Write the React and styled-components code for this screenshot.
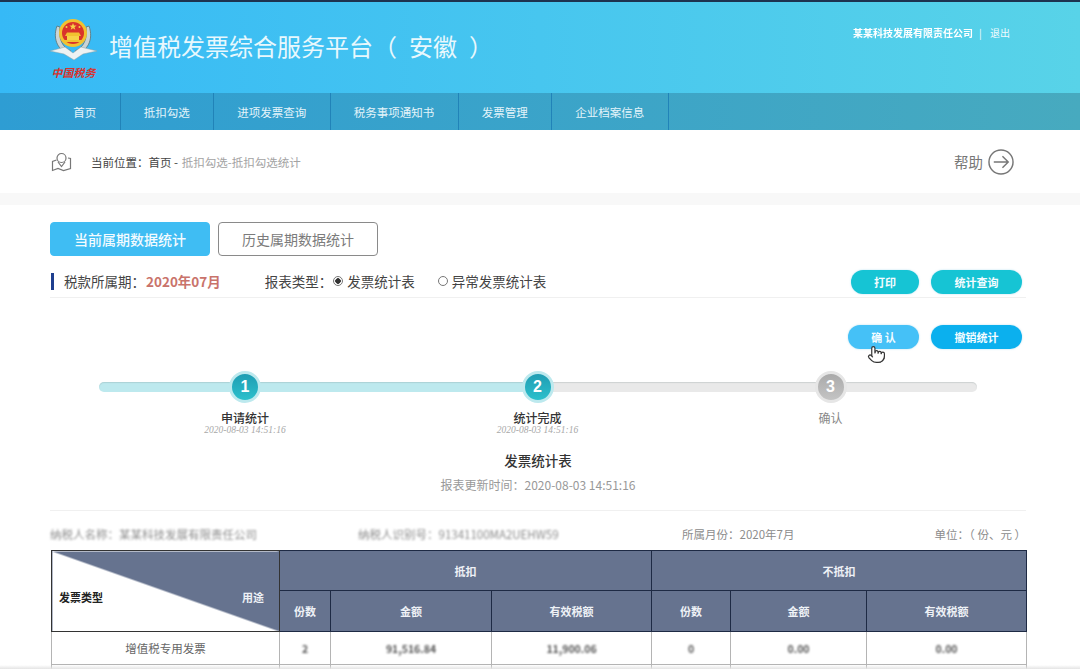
import React from "react";
import styled, { createGlobalStyle } from "styled-components";
import { Pointer } from "lucide-react";

const FONT = `"Noto Sans CJK SC", "Liberation Sans", sans-serif`;

const NAV_ITEMS = ["首页", "抵扣勾选", "进项发票查询", "税务事项通知书", "发票管理", "企业档案信息"];

const STEPS = [
  { num: 1, label: "申请统计", time: "2020-08-03 14:51:16", done: true },
  { num: 2, label: "统计完成", time: "2020-08-03 14:51:16", done: true },
  { num: 3, label: "确认", done: false },
];

const GlobalStyle = createGlobalStyle`
  html, body {
    margin: 0;
    height: 669px;
    overflow: hidden;
    background: #fff;
    font-family: ${FONT};
  }
  * { box-sizing: border-box; }
`;

const Page = styled.div`
  position: relative;
  width: 1080px;
  height: 669px;
  overflow: hidden;
  border-top: 2px solid #1d3350;

  &::after {
    content: "";
    position: absolute;
    left: 0;
    right: 0;
    bottom: 0;
    height: 4px;
    background: linear-gradient(to bottom, rgba(225, 225, 225, 0), #e4e4e4);
  }
`;

const Header = styled.header`
  display: flex;
  justify-content: space-between;
  height: 91px;
  padding: 11px 70px 0 50px;
  background: linear-gradient(to right, #36b9f6, #58d3e8);
`;

const Brand = styled.div`
  display: flex;
  align-items: flex-start;
  gap: 12px;
`;

const LogoBox = styled.div`
  display: flex;
  flex-direction: column;
  align-items: center;
  width: 47px;
`;

const LogoText = styled.span`
  margin-top: 3px;
  font-size: 11px;
  line-height: 14px;
  font-weight: 700;
  font-style: italic;
  white-space: nowrap;
  color: #d8322c;
`;

const BrandTitle = styled.h1`
  margin: 16px 0 0;
  font-size: 24px;
  line-height: 34px;
  font-weight: 400;
  white-space: nowrap;
  color: #e8f8fd;
`;

const BrandRegion = styled.span`
  margin: 0 12px;
`;

const UserBar = styled.div`
  display: flex;
  align-items: center;
  gap: 6px;
  height: 18px;
  margin-top: 10px;
  font-size: 10px;
  color: #f1fbfe;
`;

const UserName = styled.span`
  font-size: 10px;
  font-weight: 700;
  color: #fff;
  filter: blur(0.7px);
`;

const Nav = styled.nav`
  display: flex;
  height: 37px;
  padding-left: 50px;
  background: linear-gradient(to right, #2e9dd3, #47aabf);
`;

const NavItem = styled.a`
  display: flex;
  align-items: center;
  padding: 0 23.25px;
  border-right: 1px solid #2183b8;
  font-size: 11.5px;
  color: #e4f4fa;
`;

const Crumbs = styled.div`
  display: flex;
  align-items: center;
  justify-content: space-between;
  height: 63px;
  padding: 0 66px 0 51px;
`;

const CrumbTrail = styled.div`
  display: flex;
  align-items: center;
  gap: 19px;
  font-size: 11.5px;
  color: #444;
`;

const CrumbMuted = styled.span`
  margin-left: 1px;
  color: #a3a3a3;
`;

const HelpLink = styled.a`
  display: flex;
  align-items: center;
  gap: 5px;
  font-size: 14.5px;
  color: #777;
`;

const Strip = styled.div`
  height: 12px;
  background: #f8f8f8;
`;

const Main = styled.main`
  position: relative;
  padding: 17px 54px 0 50px;
`;

const Tabs = styled.div`
  display: flex;
  gap: 8px;
`;

const Tab = styled.button`
  width: 160px;
  height: 34px;
  padding: 0;
  border: 1px solid ${(p) => (p.$active ? "#3fbdf3" : "#8a8a8a")};
  border-radius: 4px;
  background: ${(p) => (p.$active ? "#3fbdf3" : "#fff")};
  font-family: ${FONT};
  font-size: 14px;
  font-weight: ${(p) => (p.$active ? 500 : 400)};
  color: ${(p) => (p.$active ? "#f3fbff" : "#7b7b7b")};
`;

const FilterRow = styled.div`
  display: flex;
  align-items: center;
  justify-content: space-between;
  height: 28px;
  margin-top: 14px;
  border-bottom: 1px solid #f0f0f0;
  font-size: 13.5px;
  color: #444;
`;

const Period = styled.div`
  display: flex;
  align-items: center;
  height: 17px;
  margin: -5px 0 0 1px;
  padding-left: 10px;
  border-left: 3px solid #1f3f8f;
  white-space: nowrap;
`;

const PeriodValue = styled.b`
  margin-left: 1px;
  color: #c9736b;
`;

const ReportType = styled.span`
  margin-left: 44px;
`;

const RadioMark = styled.i`
  display: inline-block;
  width: 10px;
  height: 10px;
  margin: 0 4px 0 0;
  border: 1px solid #777;
  border-radius: 50%;
  background: ${(p) => (p.$on ? "radial-gradient(circle, #333 0 2.5px, #fff 3px)" : "#fff")};
`;

const RadioItem = styled.label`
  display: flex;
  align-items: center;
  margin-left: ${(p) => p.$gap}px;
`;

const ButtonGroup = styled.div`
  display: flex;
  justify-content: flex-end;
  gap: 12px;
  margin: ${(p) => p.$margin || 0};
`;

const Pill = styled.button`
  width: ${(p) => p.$width}px;
  height: 24px;
  padding: 0;
  border: 0;
  border-radius: 12px;
  background: ${(p) => p.$color};
  box-shadow: 0 0 2px rgba(120, 200, 230, 0.6);
  font-family: ${FONT};
  font-size: 11px;
  font-weight: 700;
  white-space: pre;
  color: #f4fcff;
`;

const CursorHand = styled.span`
  position: absolute;
  left: 867px;
  top: 140px;
  display: flex;
  color: #333;
`;

const Stepper = styled.div`
  position: relative;
  display: grid;
  grid-template-columns: 292px 293px 293px;
  margin: 22px 0 0 49px;
  width: 878px;
  height: 78px;

  &::before {
    content: "";
    position: absolute;
    left: 0;
    right: 0;
    top: 11px;
    height: 10px;
    border-radius: 5px;
    background: linear-gradient(to right, #bde9ee 0 439px, #e9e9e9 439px);
    box-shadow: inset 0 1px 1px rgba(120, 140, 140, 0.25);
  }
`;

const Step = styled.div`
  position: relative;
  display: flex;
  flex-direction: column;
  align-items: center;
`;

const StepDot = styled.div`
  display: flex;
  align-items: center;
  justify-content: center;
  width: 32px;
  height: 32px;
  border: 3px solid ${(p) => (p.$done ? "#bde9ee" : "#e6e6e6")};
  border-radius: 50%;
  background: ${(p) => (p.$done ? "linear-gradient(to bottom, #1f9db3, #2cc0cc)" : "linear-gradient(to bottom, #aaa, #c4c4c4)")};
  font-family: "Liberation Sans", sans-serif;
  font-size: 16px;
  font-weight: 700;
  color: #fff;
`;

const StepLabel = styled.div`
  margin-top: 7px;
  font-size: 12px;
  line-height: 15px;
  white-space: nowrap;
  font-weight: ${(p) => (p.$done ? 500 : 400)};
  color: ${(p) => (p.$done ? "#333" : "#888")};
`;

const StepTime = styled.div`
  font-family: "Liberation Serif", serif;
  font-size: 9.5px;
  line-height: 10px;
  font-style: italic;
  white-space: nowrap;
  color: #a8a8a8;
`;

const ReportHead = styled.div`
  display: flex;
  flex-direction: column;
  align-items: center;
  height: 62px;
  margin-top: 0;
  padding-top: 1px;
  border-bottom: 1px solid #f0f0f0;
`;

const ReportTitle = styled.h2`
  margin: 0;
  font-size: 13.5px;
  line-height: 20px;
  font-weight: 500;
  color: #333;
`;

const ReportTime = styled.div`
  margin-top: 6px;
  font-size: 12px;
  line-height: 18px;
  color: #999;
`;

const InfoRow = styled.div`
  display: flex;
  align-items: center;
  height: 18px;
  margin-top: 14px;
  font-size: 11.5px;
  color: #8c8c8c;
`;

const InfoCell = styled.span`
  width: ${(p) => p.$width}px;
  white-space: nowrap;
  filter: ${(p) => (p.$hidden ? "blur(0.8px)" : "none")};
`;

const InfoUnit = styled.span`
  margin-left: auto;
  white-space: pre;
`;

const Table = styled.table`
  width: 975px;
  margin: 7px 0 0 1px;
  border-collapse: collapse;
  table-layout: fixed;
  font-size: 11px;
`;

const Th = styled.th`
  height: ${(p) => p.$height}px;
  padding: 0;
  border: 1px solid #1e2a44;
  background: #66738f;
  font-weight: 700;
  color: #eef1f6;
`;

const CornerTh = styled.th`
  position: relative;
  padding: 0;
  border: 1px solid #333;
  background: linear-gradient(to top right, #fff calc(50% - 0.5px), #66738f calc(50% + 0.5px));
  font-weight: 700;
`;

const CornerWrap = styled.div`
  display: flex;
  justify-content: space-between;
  padding: 11px 15px 0 7px;
`;

const CornerLeft = styled.span`
  color: #222;
`;

const CornerRight = styled.span`
  color: #eef1f6;
`;

const Td = styled.td`
  height: ${(p) => p.$height || 33}px;
  padding: 0;
  border: 1px solid #b4b4b4;
  border-top: 0;
  text-align: center;
  font-size: 11.5px;
  color: #666;
`;

const Blurred = styled.span`
  display: inline-block;
  font-size: 10.5px;
  font-weight: 700;
  color: #555;
  filter: blur(1px);
`;

function Logo() {
  return (
    <LogoBox>
      <svg width="47" height="49" viewBox="0 0 47 49">
        <path d="M7 13 C2 27 9 38 19 41 L21 38 C13 35 8 26 10 14 Z" fill="#c9d4d6" stroke="#5f7a80" strokeWidth="0.9" />
        <path d="M39 13 C44 27 37 38 27 41 L25 38 C33 35 38 26 36 14 Z" fill="#c9d4d6" stroke="#5f7a80" strokeWidth="0.9" />
        <path d="M0 38 L15 34 L23 40 L31 34 L47 38 L33 41 L24 47 L14 41 Z" fill="#eef2f3" stroke="#8aa0a6" strokeWidth="0.5" />
        <circle cx="23" cy="20" r="14" fill="#f2c230" />
        <circle cx="23" cy="20" r="11" fill="#d9342b" />
        <path d="M23 10 l1 2.6 2.6 0 -2.1 1.6 0.8 2.6 -2.3 -1.6 -2.3 1.6 0.8 -2.6 -2.1 -1.6 2.6 0 Z" fill="#f7d348" />
        <circle cx="16.5" cy="14" r="1" fill="#f7d348" />
        <circle cx="29.5" cy="14" r="1" fill="#f7d348" />
        <path d="M15 23 L31 23 L29 19.5 L17 19.5 Z" fill="#f2c230" />
        <rect x="17" y="23" width="12" height="4" fill="#f7d348" />
        <rect x="13" y="27" width="20" height="2" fill="#f2c230" />
      </svg>
      <LogoText>中国税务</LogoText>
    </LogoBox>
  );
}

function LocationIcon() {
  return (
    <svg width="21" height="20" viewBox="0 0 21 20" fill="none" stroke="#777" strokeWidth="1.2">
      <circle cx="10.5" cy="6" r="4.5" />
      <path d="M7 10 L10.5 14.5 L14 10" />
      <path d="M5.5 8 L1.5 9.5 V18.5 L7 16.5 L12.5 18.5 L19.5 16.5 V6.5 L17 6" />
    </svg>
  );
}

function HelpIcon() {
  return (
    <svg width="26" height="26" viewBox="0 0 27 27" fill="none" stroke="#777" strokeWidth="1.5">
      <circle cx="13.5" cy="13.5" r="12.5" />
      <path d="M6 13.5 H21 M15 7.5 L21 13.5 L15 19.5" />
    </svg>
  );
}

function Stepbar() {
  return (
    <Stepper>
      {STEPS.map((step) => (
        <Step key={step.num}>
          <StepDot $done={step.done}>{step.num}</StepDot>
          <StepLabel $done={step.done}>{step.label}</StepLabel>
          {step.time && <StepTime>{step.time}</StepTime>}
        </Step>
      ))}
    </Stepper>
  );
}

function StatsTable() {
  const subHeads = ["份数", "金额", "有效税额", "份数", "金额", "有效税额"];
  const values = ["2", "91,516.84", "11,900.06", "0", "0.00", "0.00"];

  return (
    <Table>
      <colgroup>
        <col style={{ width: 228 }} />
        <col style={{ width: 51 }} />
        <col style={{ width: 161 }} />
        <col style={{ width: 160 }} />
        <col style={{ width: 79 }} />
        <col style={{ width: 136 }} />
        <col style={{ width: 160 }} />
      </colgroup>
      <thead>
        <tr>
          <CornerTh rowSpan={2}>
            <CornerWrap>
              <CornerLeft>发票类型</CornerLeft>
              <CornerRight>用途</CornerRight>
            </CornerWrap>
          </CornerTh>
          <Th colSpan={3} $height={40}>抵扣</Th>
          <Th colSpan={3} $height={40}>不抵扣</Th>
        </tr>
        <tr>
          {subHeads.map((head, i) => (
            <Th key={i} $height={41}>{head}</Th>
          ))}
        </tr>
      </thead>
      <tbody>
        <tr>
          <Td>增值税专用发票</Td>
          {values.map((value, i) => (
            <Td key={i}><Blurred>{value}</Blurred></Td>
          ))}
        </tr>
        <tr>
          <Td />
          {values.map((value, i) => (
            <Td key={i} />
          ))}
        </tr>
      </tbody>
    </Table>
  );
}

export default function App() {
  return (
    <>
      <GlobalStyle />
      <Page>
        <Header>
          <Brand>
            <Logo />
            <BrandTitle>
              增值税发票综合服务平台（<BrandRegion>安徽</BrandRegion>）
            </BrandTitle>
          </Brand>
          <UserBar>
            <UserName>某某科技发展有限责任公司</UserName>
            <span>|</span>
            <span>&nbsp;退出</span>
          </UserBar>
        </Header>
        <Nav>
          {NAV_ITEMS.map((item) => (
            <NavItem key={item}>{item}</NavItem>
          ))}
        </Nav>
        <Crumbs>
          <CrumbTrail>
            <LocationIcon />
            <span>
              当前位置：首页 - <CrumbMuted>抵扣勾选-抵扣勾选统计</CrumbMuted>
            </span>
          </CrumbTrail>
          <HelpLink>
            帮助
            <HelpIcon />
          </HelpLink>
        </Crumbs>
        <Strip />
        <Main>
          <Tabs>
            <Tab $active>当前属期数据统计</Tab>
            <Tab>历史属期数据统计</Tab>
          </Tabs>
          <FilterRow>
            <Period>
              税款所属期：<PeriodValue>2020年07月</PeriodValue>
              <ReportType>报表类型：</ReportType>
              <RadioItem $gap={1}><RadioMark $on />发票统计表</RadioItem>
              <RadioItem $gap={23}><RadioMark />异常发票统计表</RadioItem>
            </Period>
            <ButtonGroup $margin="-4px 4px 0 0">
              <Pill $width={68} $color="#16c4d4">打印</Pill>
              <Pill $width={91} $color="#16c4d4">统计查询</Pill>
            </ButtonGroup>
          </FilterRow>
          <ButtonGroup $margin="27px 4px 0 0">
            <Pill $width={71} $color="#45c1f7">确 认</Pill>
            <Pill $width={91} $color="#0bb0ee">撤销统计</Pill>
          </ButtonGroup>
          <CursorHand>
            <Pointer size={19} fill="#fff" strokeWidth={1.5} />
          </CursorHand>
          <Stepbar />
          <ReportHead>
            <ReportTitle>发票统计表</ReportTitle>
            <ReportTime>报表更新时间：2020-08-03 14:51:16</ReportTime>
          </ReportHead>
          <InfoRow>
            <InfoCell $width={308} $hidden>纳税人名称：某某科技发展有限责任公司</InfoCell>
            <InfoCell $width={324} $hidden>纳税人识别号：91341100MA2UEHW59</InfoCell>
            <InfoCell $width={200}>所属月份：2020年7月</InfoCell>
            <InfoUnit>单位：（ 份、元 ）</InfoUnit>
          </InfoRow>
          <StatsTable />
        </Main>
      </Page>
    </>
  );
}
